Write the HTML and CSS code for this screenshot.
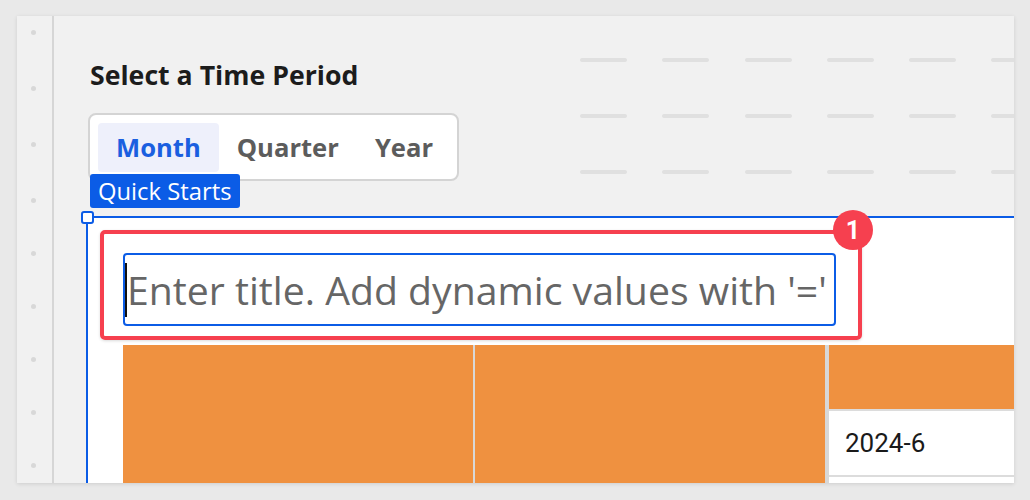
FILE: index.html
```html
<!DOCTYPE html>
<html>
<head>
<meta charset="utf-8">
<link rel="stylesheet" href="styles.css">
</head>
<body>
<div class="panel">
  <div class="ruler">
    <span class="dot"></span><span class="dot"></span><span class="dot"></span>
    <span class="dot"></span><span class="dot"></span><span class="dot"></span>
    <span class="dot"></span><span class="dot"></span><span class="dot"></span>
  </div>
  <div class="canvas">
    <div class="top-row">
      <div class="controls">
        <h2 class="title">Select a Time Period</h2>
        <div class="segmented">
          <span class="seg active">Month</span>
          <span class="seg">Quarter</span>
          <span class="seg">Year</span>
        </div>
      </div>
      <div class="dashes">
        <div class="dash-row"><span></span><span></span><span></span><span></span><span></span><span></span></div>
        <div class="dash-row"><span></span><span></span><span></span><span></span><span></span><span></span></div>
        <div class="dash-row"><span></span><span></span><span></span><span></span><span></span><span></span></div>
      </div>
    </div>
    <div class="selection">
      <div class="tag">Quick Starts</div>
      <div class="box">
        <span class="handle"></span>
        <div class="title-area">
          <div class="input"><span class="caret"></span><span class="placeholder">Enter title. Add dynamic values with '='</span></div>
          <div class="highlight"></div>
          <div class="badge">1</div>
        </div>
        <div class="table">
          <div class="col orange"></div>
          <div class="sep thin"></div>
          <div class="col orange"></div>
          <div class="sep wide"></div>
          <div class="col last">
            <div class="head"></div>
            <div class="cell">2024-6</div>
            <div class="cell empty"></div>
          </div>
        </div>
      </div>
    </div>
  </div>
</div>
</body>
</html>
```

FILE: styles.css
```css
* { box-sizing: border-box; }
html, body { margin: 0; padding: 0; }
body {
  background: #e9e9e9;
  width: 1030px;
  height: 500px;
  overflow: hidden;
  font-family: "Open Sans", "Noto Sans", sans-serif;
}
.panel {
  margin: 16px 16px 0 17px;
  height: 467px;
  background: #f1f1f1;
  display: flex;
  overflow: hidden;
  box-shadow: 0 1px 4px rgba(0,0,0,0.12);
}
.ruler {
  width: 37px;
  flex: none;
  border-right: 2px solid #d6d6d6;
  display: flex;
  flex-direction: column;
  align-items: flex-start;
  padding: 14px 0 0 14px;
}
.dot {
  width: 5px;
  height: 5px;
  border-radius: 50%;
  background: #d8d8d8;
  flex: none;
}
.dot + .dot { margin-top: 51px; }
.dot:nth-child(n+5) { margin-top: 48px; }
.canvas {
  flex: 1;
  display: flex;
  flex-direction: column;
  min-width: 0;
}
.top-row {
  display: flex;
  align-items: flex-start;
}
.controls {
  padding-left: 36px;
}
.title {
  margin: 43px 0 0 0;
  font-size: 26.7px;
  line-height: 32px;
  font-weight: 700;
  color: #1c1c1c;
  white-space: nowrap;
}
.segmented {
  margin: 22px 0 0 -2px;
  width: 371px;
  height: 68px;
  background: #fff;
  border: 2px solid #d4d4d4;
  border-radius: 8px;
  padding: 8px;
  display: flex;
}
.seg {
  height: 49px;
  padding: 0 18px;
  display: flex;
  align-items: center;
  font-size: 25.6px;
  font-weight: 700;
  color: #5c5c5c;
  border-radius: 4px;
  white-space: nowrap;
}
.seg.active {
  background: #eef0fb;
  color: #1a5fe0;
}
.dashes {
  margin-left: auto;
  margin-top: 42px;
  width: 434px;
  display: flex;
  flex-direction: column;
  gap: 52px;
  overflow: hidden;
}
.dash-row {
  display: flex;
  gap: 35.3px;
}
.dash-row span {
  flex: none;
  width: 47px;
  height: 4px;
  border-radius: 2px;
  background: #e0e0e0;
}
.selection {
  margin: -7px 0 0 32px;
  flex: 1;
  display: flex;
  flex-direction: column;
}
.tag {
  align-self: flex-start;
  margin-left: 4px;
  height: 34px;
  padding: 0 8px;
  background: #0b5ce6;
  color: #fff;
  font-size: 23.8px;
  line-height: 34px;
  border-radius: 3px;
  position: relative;
  white-space: nowrap;
}
.box {
  margin-top: 8px;
  flex: 1;
  background: #fff;
  border-top: 2px solid #0b5ce6;
  border-left: 2px solid #0b5ce6;
  padding: 35px 0 0 35px;
  position: relative;
}
.handle {
  position: absolute;
  left: -7px;
  top: -7px;
  width: 13px;
  height: 13px;
  background: #fff;
  border: 2px solid #0b5ce6;
  border-radius: 3px;
}
.title-area {
  position: relative;
  width: 713px;
}
.input {
  height: 73px;
  border: 2px solid #0b5ce6;
  border-radius: 4px;
  display: flex;
  align-items: center;
  padding-left: 0;
  white-space: nowrap;
  overflow: hidden;
}
.caret {
  flex: none;
  width: 2px;
  height: 54px;
  background: #111;
}
.placeholder {
  font-size: 39.2px;
  color: #666;
}
.highlight {
  position: absolute;
  left: -23px;
  top: -23px;
  width: 762px;
  height: 110px;
  border: 4px solid #f6404f;
  border-radius: 5px;
  box-shadow: 0 1px 3px rgba(0,0,0,0.15);
}
.badge {
  position: absolute;
  left: 710px;
  top: -43px;
  width: 40px;
  height: 40px;
  border-radius: 50%;
  background: #f6404f;
  color: #fff;
  font-family: "Roboto", "Lato", sans-serif;
  font-weight: 700;
  font-size: 25px;
  display: flex;
  align-items: center;
  justify-content: center;
}
.table {
  margin-top: 19px;
  display: flex;
  height: 200px;
}
.col { width: 350px; flex: none; }
.orange { background: #ef9140; }
.sep { flex: none; background: #d8d8d8; }
.sep.thin { width: 2px; }
.sep.wide { width: 4px; }
.col.last {
  flex: 1;
  width: auto;
  display: flex;
  flex-direction: column;
}
.head {
  height: 66px;
  background: #ef9140;
  border-bottom: 2px solid #dcdcdc;
}
.cell {
  height: 66px;
  border-bottom: 2px solid #dcdcdc;
  padding-left: 16px;
  display: flex;
  align-items: center;
  font-family: "Roboto", sans-serif;
  font-size: 26px;
  color: #1a1a1a;
}
.cell.empty { border-bottom: none; }
```
